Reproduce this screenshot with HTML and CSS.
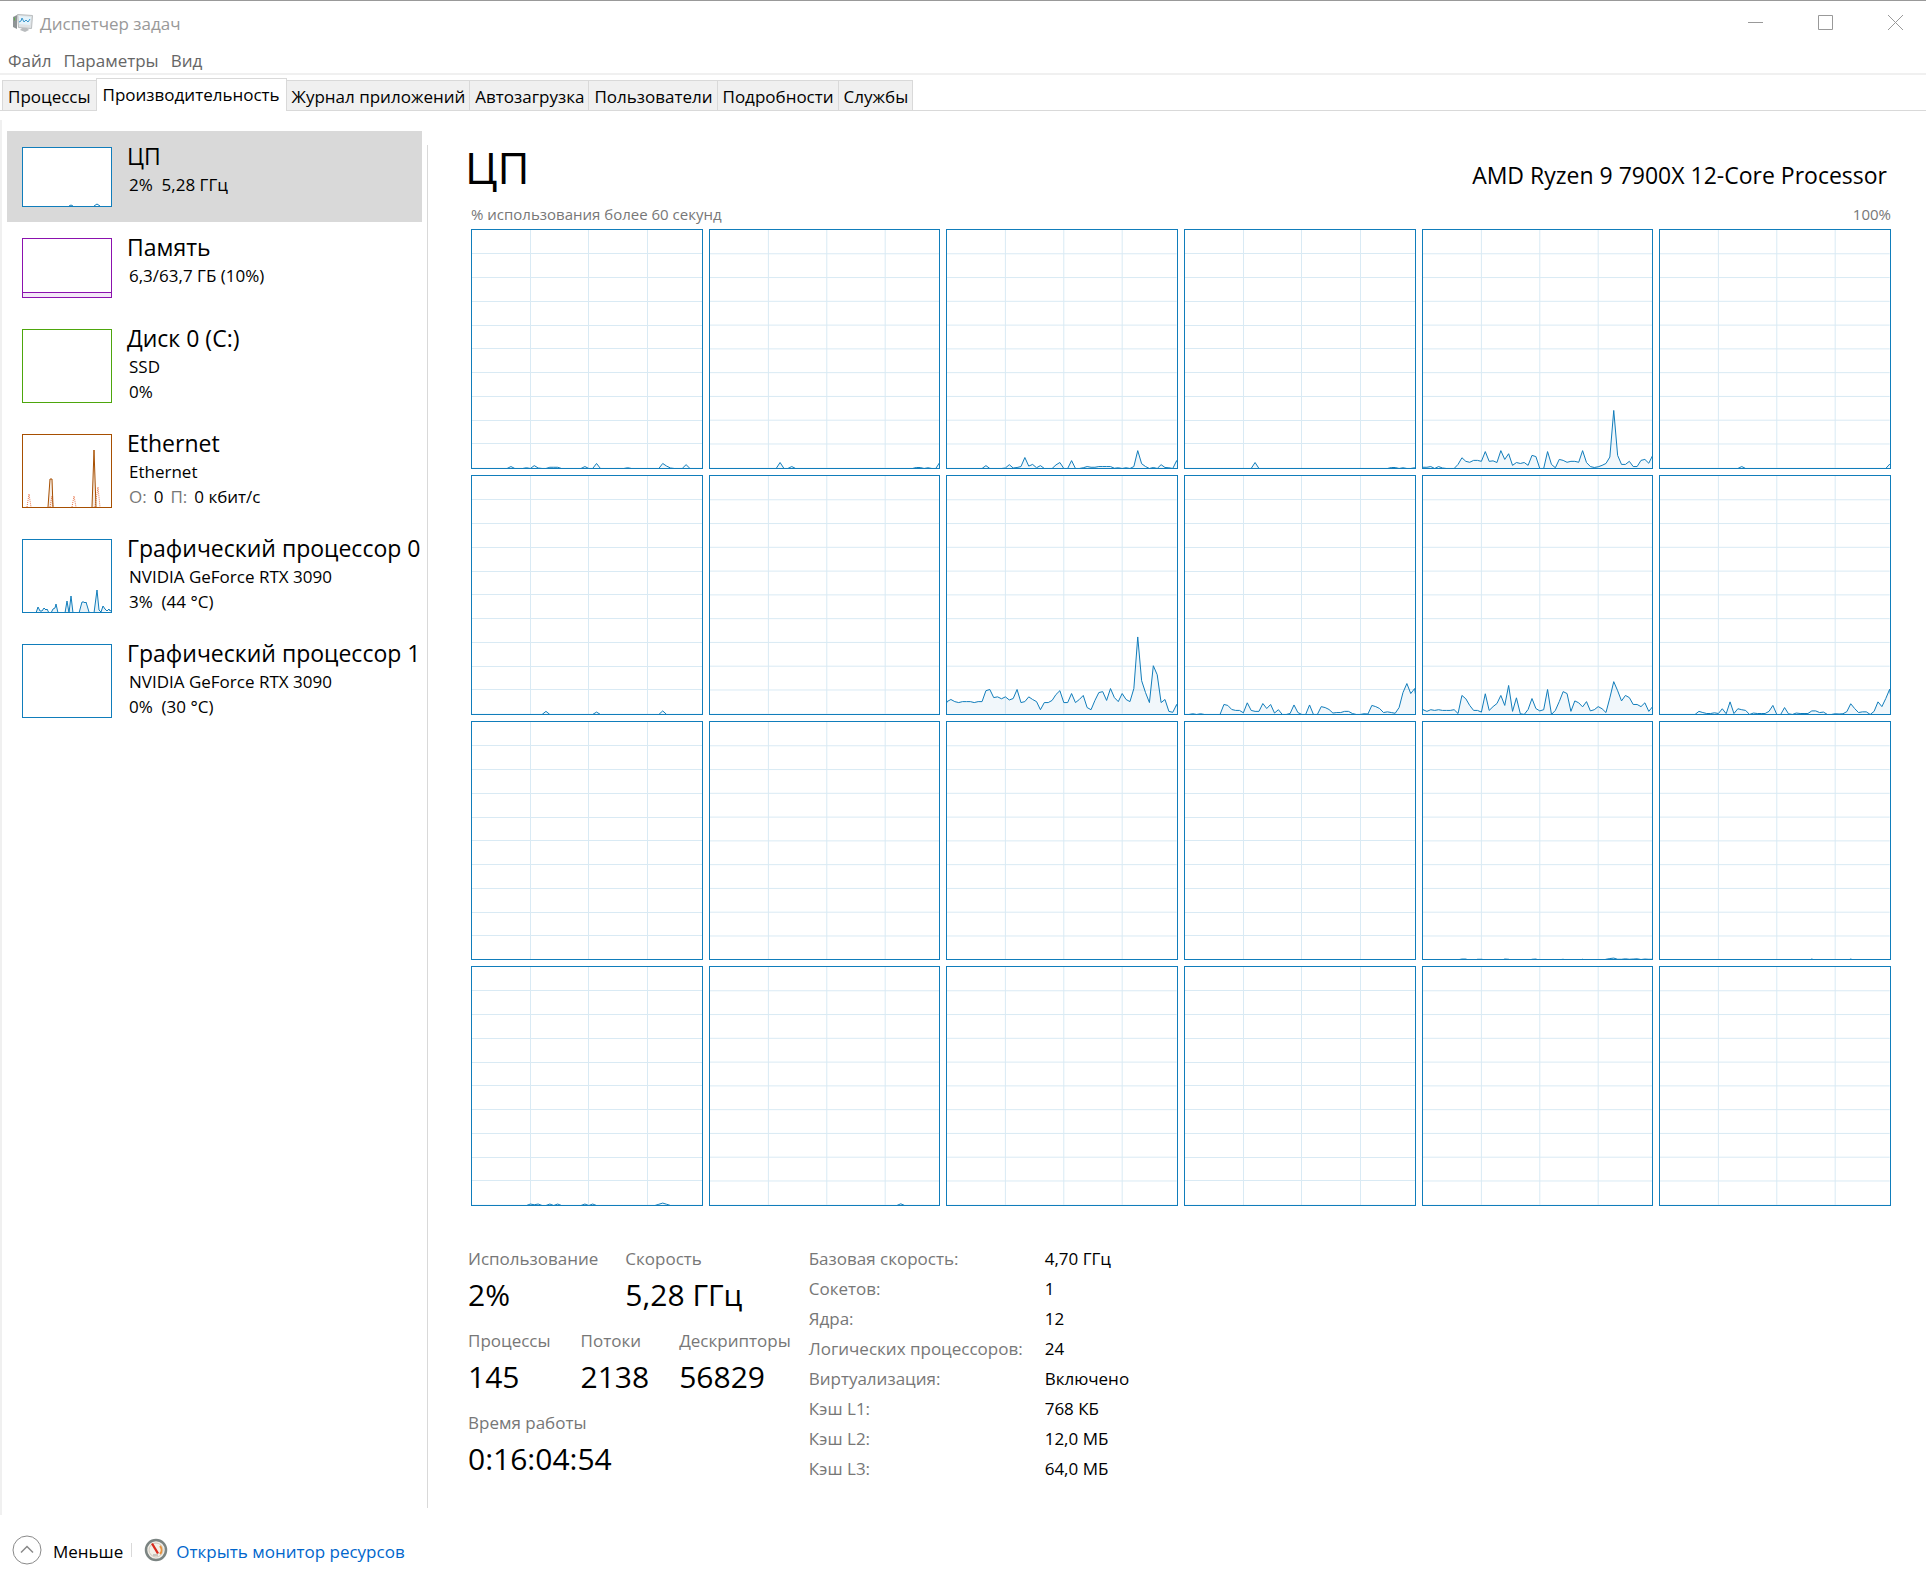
FILE: index.html
```
<!DOCTYPE html>
<html lang="ru">
<head>
    <meta charset="UTF-8">
    <meta name="viewport" content="width=device-width, initial-scale=1.0">
    <title>Диспетчер задач</title>
    <link rel="stylesheet" href="styles.css">
</head>
<body>
    <!-- Title bar -->
    <header class="titlebar">
        <svg class="app-icon" width="22" height="20" viewBox="0 0 22 20">
            <path d="M1 4l4-2v14l-4-2z" fill="#8f9496"/>
            <path d="M2 5l1-1v3l-1 1z" fill="#5fae4d"/>
            <path d="M5.500 1.500l15 1-1 13-13-1z" fill="#dfe2e4" stroke="#b9bdbf"/>
            <path d="M7 3l12 1-1 8-11-1z" fill="#e4f3fb"/>
            <path d="M7 9l2-1 1-3 2 4 2-2 2 2 2-3" fill="none" stroke="#3b97cc"/>
            <path d="M10 15h5l2 2-4 2-5-2z" fill="#b9bcbe"/>
        </svg>
        <span class="app-title">Диспетчер задач</span>
        <div class="window-buttons">
            <button type="button" aria-label="Свернуть"><svg width="15" height="15"><path d="M0 7.500h15"/></svg></button>
            <button type="button" aria-label="Развернуть"><svg width="15" height="15"><path d="M.5 .5h14v14h-14z"/></svg></button>
            <button type="button" aria-label="Закрыть"><svg width="15" height="15"><path d="M0 0l15 15M15 0l-15 15"/></svg></button>
        </div>
    </header>

    <nav class="menu">
        <button type="button">Файл</button>
        <button type="button">Параметры</button>
        <button type="button">Вид</button>
    </nav>

    <nav class="tabs" role="tablist">
        <button type="button" role="tab">Процессы</button>
        <button type="button" role="tab" class="active" aria-selected="true">Производительность</button>
        <button type="button" role="tab">Журнал приложений</button>
        <button type="button" role="tab">Автозагрузка</button>
        <button type="button" role="tab">Пользователи</button>
        <button type="button" role="tab">Подробности</button>
        <button type="button" role="tab">Службы</button>
    </nav>

    <main class="pane">
        <!-- Device list -->
        <aside class="devices">
            <button type="button" class="device selected">
                <svg class="thumb short blue" viewBox="0 0 88 58" preserveAspectRatio="none">
                    <path d="M46 58l2-1 2 1M71 58l3-2 3 2"/>
                </svg>
                <span class="device-text">
                    <span class="device-name">ЦП</span>
                    <span>2%&nbsp; 5,28 ГГц</span>
                </span>
            </button>
            <button type="button" class="device">
                <svg class="thumb short purple" viewBox="0 0 88 58" preserveAspectRatio="none">
                    <path class="area" d="M-1 53.500h90v6h-90z"/>
                </svg>
                <span class="device-text">
                    <span class="device-name">Память</span>
                    <span>6,3/63,7 ГБ (10%)</span>
                </span>
            </button>
            <button type="button" class="device">
                <svg class="thumb green" viewBox="0 0 88 72" preserveAspectRatio="none"></svg>
                <span class="device-text">
                    <span class="device-name">Диск 0 (C:)</span>
                    <span>SSD</span>
                    <span>0%</span>
                </span>
            </button>
            <button type="button" class="device">
                <svg class="thumb orange" viewBox="0 0 88 72" preserveAspectRatio="none">
                    <path class="dotted" d="M4 72l2-13 2 13M27 72l2-11 1 11M49 72l2-11 2 11M72 72l3-20 2 20"/>
                    <path class="area" d="M25 72l2-28h2l1 28M69 72l2-57 2 57"/>
                </svg>
                <span class="device-text">
                    <span class="device-name">Ethernet</span>
                    <span>Ethernet</span>
                    <span class="traffic"><span class="dim">О:</span><span>0</span><span class="dim">П:</span><span>0 кбит/с</span></span>
                </span>
            </button>
            <button type="button" class="device">
                <svg class="thumb blue" viewBox="0 0 88 72" preserveAspectRatio="none">
                    <path class="area" d="M13 73L15 67L17 71L19 71L21 68L23 70L24 69L26 73M28 73L30 69L32 68L33 64L35 73M42 73L44 61L46 73M46 73L48 56L50 73M56 73L59 62L61 62L62 63L63 62L66 72L67 73M71 73L74 50L76 70L78 72L80 66L82 69L84 71L86 69L87 71L89 70"/>
                </svg>
                <span class="device-text">
                    <span class="device-name">Графический процессор 0</span>
                    <span>NVIDIA GeForce RTX 3090</span>
                    <span>3%&nbsp; (44 °C)</span>
                </span>
            </button>
            <button type="button" class="device">
                <svg class="thumb blue" viewBox="0 0 88 72" preserveAspectRatio="none"></svg>
                <span class="device-text">
                    <span class="device-name">Графический процессор 1</span>
                    <span>NVIDIA GeForce RTX 3090</span>
                    <span>0%&nbsp; (30 °C)</span>
                </span>
            </button>
        </aside>

        <!-- CPU details -->
        <section class="details">
            <div class="details-head">
                <h1>ЦП</h1>
                <span class="cpu-name">AMD Ryzen 9 7900X 12-Core Processor</span>
            </div>
            <div class="caption">
                <span>% использования более 60 секунд</span>
                <span>100%</span>
            </div>
            <div class="cores" id="cores"></div>

            <div class="info">
                <div class="stats">
                    <dl class="stat-row">
                        <div><dt>Использование</dt><dd>2%</dd></div>
                        <div><dt>Скорость</dt><dd>5,28 ГГц</dd></div>
                    </dl>
                    <dl class="stat-row">
                        <div><dt>Процессы</dt><dd>145</dd></div>
                        <div><dt>Потоки</dt><dd>2138</dd></div>
                        <div><dt>Дескрипторы</dt><dd>56829</dd></div>
                    </dl>
                    <dl class="stat-row">
                        <div><dt>Время работы</dt><dd>0:16:04:54</dd></div>
                    </dl>
                </div>
                <table class="specs">
                    <tr><th scope="row">Базовая скорость:</th><td>4,70 ГГц</td></tr>
                    <tr><th scope="row">Сокетов:</th><td>1</td></tr>
                    <tr><th scope="row">Ядра:</th><td>12</td></tr>
                    <tr><th scope="row">Логических процессоров:</th><td>24</td></tr>
                    <tr><th scope="row">Виртуализация:</th><td>Включено</td></tr>
                    <tr><th scope="row">Кэш L1:</th><td>768 КБ</td></tr>
                    <tr><th scope="row">Кэш L2:</th><td>12,0 МБ</td></tr>
                    <tr><th scope="row">Кэш L3:</th><td>64,0 МБ</td></tr>
                </table>
            </div>
        </section>
    </main>

    <!-- Footer -->
    <footer class="footer">
        <button type="button" class="fewer">
            <svg width="30" height="30" viewBox="0 0 30 30" fill="none">
                <circle cx="15" cy="15" r="14" stroke="#8a8a8a"/>
                <path d="M9 17.500l6-6 6 6" stroke="#8a8a8a" stroke-width="1.500"/>
            </svg>
            <span>Меньше</span>
        </button>
        <a href="#" class="monitor">
            <svg width="24" height="24" viewBox="0 0 24 24">
                <circle cx="12" cy="12" r="10" fill="#f3efe8" stroke="#7b8482" stroke-width="2.500"/>
                <circle cx="12" cy="12" r="7" fill="none" stroke="#cfc8bd"/>
                <path d="M16 8a6 6 0 0 1 0 8" fill="none" stroke="#e8923c" stroke-width="2"/>
                <path d="M7 6l2-1 6 10-2 1z" fill="#d8291c"/>
                <path d="M9 17h5" stroke="#9a9a94"/>
            </svg>
            <span>Открыть монитор ресурсов</span>
        </a>
    </footer>

    <script>
        // Load history of every logical processor, in percent.
        // Each run is [first second, value, value, ...], everything else is 0.
        const cores = [
            [[10, .8], [14, .3], [16, 1.2, .2], [20, .5, .5, .5], [29, .8], [32, 2.1], [40, .3], [49, 2.1, 1, .2], [55, 1.6]],
            [[18, 2.5], [21, .8], [53, .4, .4], [56, .3], [59, 2.5]],
            [[10, 1.2], [15, .2, 1.6, .2, .4, .8, 4.6, 1, 1.7, .3, 1.2], [28, 1.5, 2.5], [32, 3.3], [35, .3, .8, .5, .5, .8, .8, .8, .8, .1, .3], [46, .3], [48, .8, 7.5, 2, .8], [53, .4], [55, 1.6, .4, .3, 0, 3.3]],
            [[18, 2.5], [53, .4, .4], [56, .3], [59, .3]],
            [[0, .5, .5, .8, 0, .8, .2], [9, 1.7, 4.5, 3, 2.6, 3.4, 3.4, 3, 7.1, 3, 3.2, 2.5, 7.5, 3.8, 6.2, 1.3, 2.5, 2.1, 2.5, 1.3, 5.5, 5, 0, 0, 7.1, 1.7, .3, 3.8, 3.4, 2.6, 3, 3, 2.6, 7.5, 2.5, .8, .4, .7, 1.3, 2.1, 4.8, 24.4, 5.5, 1.7, 1.7, 3, .8, .8, 3.4, 3.8, 2.2, 5.5]],
            [[21, .8], [59, 1.8]],
            [[19, 1.3], [32, 1], [49, 1.5]],
            [],
            [[0, 5.4, 6.3, 5.4, 5, 5.4, 5.4, 5.4, 5, 5.4, 5.4, 10, 10.5, 7.1, 7.4, 6.6, 7.4, 6.1, 6.7, 10.5, 5, 5.4, 7.4, 6.3, 5.4, 2, 5, 5, 5.9, 8.4, 10, 5, 5, 8.8, 5, 6.3, 8, 2.9, 2, 5.9, 9.2, 9.6, 5.9, 10.9, 7.1, 5.4, 8.8, 6.3, 5.4, 10.9, 32.6, 14.2, 9.2, 5, 20.5, 16.7, 5, 6.3, 1.3, .9, 4.2]],
            [[2, .3], [4, .3], [10, 4.2, 3.8, 2.1, 1.7, 1.7, .7, 4.9, 1.7, 1.3, 1.3, 4.6, 2.5, 4.2, .6, 2], [27, .4, 4, .8], [32, 4], [35, 3.3, 2.9, 2.1, .6, .8, .8, 1.3, 1.3, .4], [46, .3, .2, 3.8, 3.3, 2.5, .8, 1.1, .8, .5, 2.9, 9.2, 13, 8.8, 10.9]],
            [[0, 2, 1.3, 2, 1.7, 2, 1.7, 1.7, 1.7, 2, .4, 8, 6.6, 3.8, 1.7, 1.7, 1, 8.7, 1.7, 3.3, 4.6, 8, 3.8, 12.2, 1.3, 7, .3, 0, 2.1, 6.7, 2.5, 1.5, 2, 10.5, 0, 1.7, 5.4, 9.6, 8.8, 1.3, 5.7, 4.9, 3.2, 5.4, 1.5, 2, 3.3, 2.4, .8, 7, 13.8, 10, 5.7, 8, 7.1, 4.2, 4.2, 3.3, 4.9, 1.3, 3.3]],
            [[10, 1.3, .8, .4, .4, .7, .4, 2.4, .3, 5.3, .4, 2.4, 2, 1.7, 0, .6, .4, .4, .4, 1.3, 3.8], [32, 2.9, .3, 0, .6, .4, .4, .4, 1.5, 1.5, .8, 1], [45, .3, .2, .3, 1.2, 4.5, 2.5, .8, 1.1, 1.1, 0, 1.3, 5.3, 3.3, 6.7, 10.6]],
            [], [], [], [],
            [[9, .3, .6, .6], [14, .5, .5, .3], [21, .6, .5], [28, .5, .6], [35, .3, .5], [41, .5], [47, .5, .8, 1, .5, .5, .7, .5, .6, .7, .4, .6, .5, .5]],
            [[39, .6], [49, .6]],
            [[15, .6, .3, .6], [20, .6], [22, .6], [29, .6], [31, .6], [48, .5, 1, .5]],
            [[49, .7]],
            [], [], [], []
        ];

        function drawCore(runs) {
            const load = new Array(60).fill(0);
            runs.forEach(([start, ...values]) => {
                values.forEach((value, i) => load[start + i] = value);
            });

            let grid = '';
            for (let x = 15; x < 59; x += 15) {
                grid += `M${x} 0V100`;
            }
            for (let y = 10; y < 100; y += 10) {
                grid += `M0 ${y}H59`;
            }

            // an idle core stays hidden behind the bottom border
            const line = load.map((value, i) => `${i} ${100.3 - value}`).join('L');
            return `<svg class="core" viewBox="0 0 59 100" preserveAspectRatio="none">
                <path class="core-grid" d="${grid}"/>
                <path class="core-area" d="M-1 101L${line}L60 101Z"/>
            </svg>`;
        }

        document.getElementById('cores').innerHTML = cores.map(drawCore).join('');
    </script>
</body>
</html>
```
FILE: styles.css
```
* {
    box-sizing: border-box;
}

body {
    display: flex;
    flex-direction: column;
    min-height: 100vh;
    margin: 0;
    border-top: 1px solid #999;
    background: #fff;
    color: #000;
    font-family: 'Open Sans', 'Noto Sans', sans-serif;
    font-size: 17px;
    line-height: 25px;
}

button {
    padding: 0;
    border: none;
    background: none;
    color: inherit;
    font: inherit;
    text-align: left;
    white-space: nowrap;
}

/* Title bar */
.titlebar {
    display: flex;
    align-items: center;
    height: 44px;
    padding-left: 12px;
    color: #999;
}

.app-icon {
    margin-right: 6px;
}

.window-buttons {
    display: flex;
    margin-left: auto;
}

.window-buttons button {
    display: flex;
    justify-content: center;
    width: 70px;
    padding-bottom: 2px;
}

.window-buttons button:last-child {
    margin-right: -4px;
}

.window-buttons path {
    fill: none;
    stroke: #999;
}

.menu {
    display: flex;
    gap: 12px;
    padding: 3px 8px 0;
    border-bottom: 2px solid #f0f0f0;
    color: #666;
}

/* Tabs */
.tabs {
    display: flex;
    align-items: flex-end;
    height: 36px;
    padding-left: 2px;
    border-bottom: 1px solid #d9d9d9;
}

.tabs button {
    height: 30px;
    padding: 1px 4px 0 5px;
    border: 1px solid #d9d9d9;
    border-bottom: none;
    border-left: none;
    background: #f0f0f0;
}

.tabs button:first-child {
    padding-right: 5px;
    border-left: 1px solid #d9d9d9;
}

.tabs .active {
    height: 33px;
    margin: 0 0 -1px -1px;
    padding: 0 6px 2px;
    border-left: 1px solid #d9d9d9;
    background: #fff;
}

/* Performance pane */
.pane {
    display: flex;
    flex: 1;
    margin-top: 9px;
    border-left: 2px solid #f0f0f0;
}

.devices {
    flex: none;
    width: 420px;
    padding: 11px 0 0 5px;
}

.device {
    display: flex;
    gap: 17px;
    width: 415px;
    padding: 16px 0 15px 15px;
}

.device.selected {
    background: #d9d9d9;
}

.device-text {
    display: flex;
    flex-direction: column;
    margin-bottom: -1px;
}

.device-name {
    margin: -4px 0 3px -2px;
    font-size: 23px;
    line-height: 26px;
}

.traffic {
    display: flex;
    gap: 7px;
}

.dim {
    color: #777;
}

.thumb {
    flex: none;
    width: 90px;
    height: 74px;
    border: 1px solid;
    background: #fff;
}

.thumb.short {
    height: 60px;
}

.thumb path {
    fill: none;
    stroke: currentColor;
}

.thumb .area {
    fill: currentColor;
    fill-opacity: 0.1;
}

.thumb .dotted {
    stroke: #e8744a;
    stroke-dasharray: 1 1;
}

.blue {
    color: #117dbb;
}

.purple {
    color: #8b12ae;
}

.green {
    color: #4da60c;
}

.orange {
    color: #a74f01;
}

/* CPU details */
.details {
    display: flex;
    flex: 1;
    flex-direction: column;
    margin: 25px 0 7px 5px;
    padding: 0 35px 18px 40px;
    border-left: 1px solid #d9d9d9;
}

.details-head {
    display: flex;
    align-items: baseline;
    justify-content: space-between;
    padding-right: 4px;
}

h1 {
    margin: -8px 0 0 -3px;
    font-size: 44px;
    font-weight: normal;
    line-height: 60px;
}

.cpu-name {
    font-size: 23px;
}

.caption {
    display: flex;
    justify-content: space-between;
    padding: 5px 0 3px 3px;
    color: #777;
    font-size: 15px;
    line-height: 24px;
}

.cores {
    display: grid;
    flex: 1;
    grid-template-columns: repeat(6, 1fr);
    grid-template-rows: repeat(4, minmax(100px, 1fr));
    gap: 6px;
    margin-left: 3px;
}

.core {
    width: 100%;
    height: 0;
    min-height: 100%;
    border: 1px solid #117dbb;
}

.core path {
    vector-effect: non-scaling-stroke;
}

.core-grid {
    fill: none;
    stroke: #d9eaf4;
    shape-rendering: crispEdges;
}

.core-area {
    fill: #117dbb;
    fill-opacity: 0.06;
    stroke: #117dbb;
}

.info {
    display: flex;
    gap: 18px;
    margin-top: 38px;
}

.stat-row {
    display: flex;
    gap: 30px;
    margin: 0;
    padding-bottom: 10px;
}

.stat-row:first-child {
    gap: 27px;
}

dt {
    color: #777;
    line-height: 30px;
}

dd {
    margin: 0;
    font-size: 30px;
    line-height: 42px;
}

.specs {
    align-self: flex-start;
    border-collapse: collapse;
    line-height: 30px;
}

.specs th {
    padding: 0 22px 0 0;
    color: #777;
    font-weight: normal;
    text-align: left;
}

.specs td {
    padding: 0;
}

/* Footer */
.footer {
    display: flex;
    align-items: center;
    height: 56px;
    padding: 14px 12px 0;
}

.fewer {
    display: flex;
    align-items: center;
    gap: 11px;
    padding-right: 8px;
}

.fewer span,
.monitor span {
    padding-top: 2px;
}

.monitor {
    display: flex;
    align-items: center;
    gap: 8px;
    padding-left: 12px;
    color: #0066cc;
    text-decoration: none;
}

.monitor::before {
    height: 14px;
    margin: 0 12px 0 -12px;
    border-left: 1px solid #d9d9d9;
    content: '';
}

.monitor svg {
    margin-left: -8px;
}
```
